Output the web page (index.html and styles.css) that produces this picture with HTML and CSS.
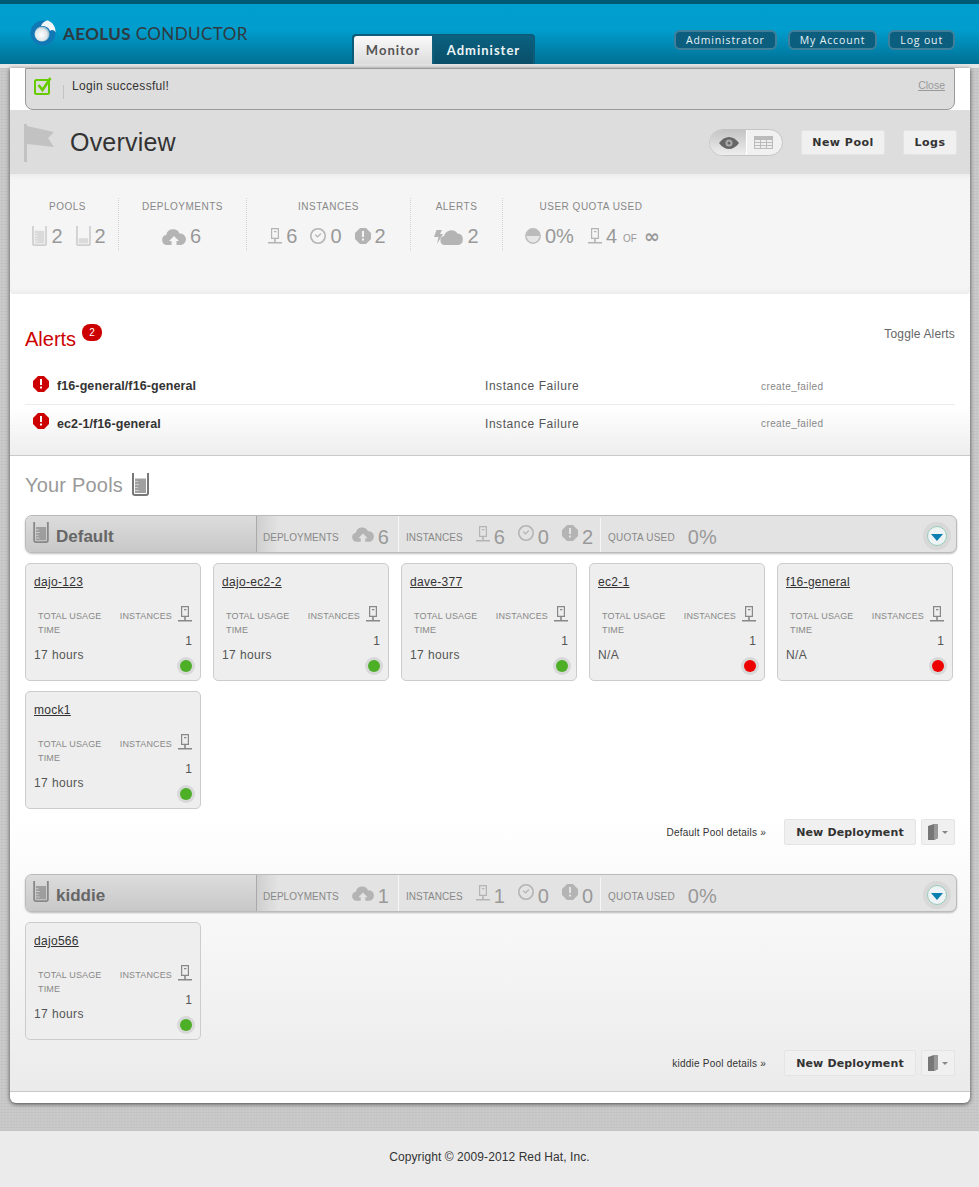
FILE: index.html
```html
<!DOCTYPE html>
<html lang="en">
<head>
<meta charset="utf-8">
<title>Aeolus Conductor</title>
<link rel="stylesheet" href="styles.css">
</head>
<body>
<svg class="defs" width="0" height="0" aria-hidden="true">
  <symbol id="i-server" viewBox="0 0 14 16"><path d="M3 0h8v11H3zM4.200 1.200v8.600h5.600V1.200z" fill-rule="evenodd"/><path d="M6 3h2.400v1.200H6zM6.200 11h1.600v3H6.200zM0 14h14v1.500H0z"/></symbol>
  <symbol id="i-clock" viewBox="0 0 16 16"><path d="M8 0a8 8 0 1 0 0 16A8 8 0 0 0 8 0zm0 1.600a6.400 6.400 0 1 1 0 12.800A6.400 6.400 0 0 1 8 1.600z" fill-rule="evenodd"/><path d="M4.800 7l.9-.8 1.800 1.900 3-3 .8.8-3.800 3.900z"/></symbol>
  <symbol id="i-alert" viewBox="0 0 16 16"><path d="M5 0h6l5 5v6l-5 5H5l-5-5V5z M7 3v6h2V3z M7 10.500v2h2v-2z" fill-rule="evenodd"/></symbol>
  <symbol id="i-cloud" viewBox="0 0 24 17"><path d="M5 17a5 5 0 0 1-.800-9.900A7 7 0 0 1 17.500 5.500 5.800 5.800 0 0 1 19 17h-4.500v-4h2.500L12 8l-5 5h2.500v4z"/></symbol>
  <symbol id="i-storm" viewBox="0 0 29 17"><path d="M11 17a4.500 4.500 0 0 1-1-8.900A7.500 7.500 0 0 1 23.500 5.500 5.800 5.800 0 0 1 24 17z"/><path d="M2.500 2H8L6 6h3l-6 10 1.500-7H0z"/></symbol>
  <symbol id="i-beaker" viewBox="0 0 17 23"><path d="M0 0h2v20a1 1 0 0 0 1 1h11a1 1 0 0 0 1-1V0h2v20a3 3 0 0 1-3 3H3a3 3 0 0 1-3-3z"/><path d="M3 5.500h11V20H3z" opacity=".7"/><path d="M3 8h3v1H3zM3 11h4v1H3zM3 14h3v1H3zM3 17h4v1H3z" fill="#fff" opacity=".45"/></symbol>
  <symbol id="i-beaker-low" viewBox="0 0 17 23"><path d="M0 0h2v20a1 1 0 0 0 1 1h11a1 1 0 0 0 1-1V0h2v20a3 3 0 0 1-3 3H3a3 3 0 0 1-3-3z"/><path d="M3 14h11v6H3z" opacity=".7"/></symbol>
</svg>

<header class="topbar">
  <div class="brand">
    <svg class="brand-mark" viewBox="0 0 26 28" width="26" height="28" aria-hidden="true">
      <defs>
        <radialGradient id="sphere" cx="45%" cy="55%" r="55%"><stop offset="0" stop-color="#fff"/><stop offset=".7" stop-color="#dfe7ea"/><stop offset="1" stop-color="#8fb6c6"/></radialGradient>
      </defs>
      <circle cx="13" cy="14" r="12.500" fill="#1177b5"/>
      <path d="M18 1.500c5 2 8 7 7.500 12-1.500-3-4-3-5.500-1.500-2-5-6-5-9-5 1-3 4-5.500 7-5.500z" fill="#f2f6f8"/>
      <circle cx="12" cy="15" r="7.500" fill="url(#sphere)"/>
    </svg>
    <div class="brand-name"><b>AEOLUS</b> CONDUCTOR</div>
  </div>
  <nav class="tabs">
    <a class="tab tab-on">Monitor</a>
    <a class="tab tab-off">Administer</a>
  </nav>
  <nav class="usernav">
    <a class="pill">Administrator</a>
    <a class="pill">My Account</a>
    <a class="pill">Log out</a>
  </nav>
</header>

<div class="sheet">
  <main class="panel">
    <div class="flash-wrap">
      <div class="flash">
        <svg class="flash-icon" viewBox="0 0 18 18" width="18" height="18" aria-hidden="true">
          <rect x="1" y="3" width="14" height="14" rx="1.500" fill="none" stroke="#6c0" stroke-width="2"/>
          <path d="M4.500 8l4 5L16.500 1" fill="none" stroke="#6c0" stroke-width="2.600"/>
        </svg>
        <span class="flash-sep"></span>
        <span class="flash-text">Login successful!</span>
        <a class="flash-close">Close</a>
      </div>
    </div>

    <section class="overview">
      <svg class="flag" viewBox="0 0 31 38" width="31" height="38" aria-hidden="true">
        <path d="M0 0h3v38H0zM3 2l27 6-6 6 6 9-27-3z" fill="#c2c2c2"/>
      </svg>
      <h1>Overview</h1>
      <div class="view-toggle">
        <span class="vt vt-on">
          <svg viewBox="0 0 20 12" width="20" height="12" aria-hidden="true"><path d="M0 6c3-4 6.500-6 10-6s7 2 10 6c-3 4-6.500 6-10 6S3 10 0 6z" fill="#666"/><circle cx="10" cy="6" r="3.500" fill="#aaa"/><circle cx="10" cy="6" r="1.500" fill="#666"/></svg>
        </span>
        <span class="vt vt-off">
          <svg viewBox="0 0 19 13" width="19" height="13" aria-hidden="true"><path d="M0 0h19v13H0z" fill="#bbb"/><path d="M1 4h5v2H1zM7 4h5v2H7zM13 4h5v2h-5zM1 7h5v2H1zM7 7h5v2H7zM13 7h5v2h-5zM1 10h5v2H1zM7 10h5v2H7zM13 10h5v2h-5z" fill="#eee"/></svg>
        </span>
      </div>
      <a class="btn btn-pool">New Pool</a>
      <a class="btn btn-logs">Logs</a>
    </section>

    <section class="stats">
      <div class="stat stat-pools">
        <div class="stat-label">POOLS</div>
        <div class="stat-row">
          <svg class="ic beaker-soft" width="15" height="20"><use href="#i-beaker"/></svg><span class="num">2</span>
          <svg class="ic beaker-soft gap-m" width="15" height="20"><use href="#i-beaker-low"/></svg><span class="num">2</span>
        </div>
      </div>
      <div class="stat stat-deploy">
        <div class="stat-label">DEPLOYMENTS</div>
        <div class="stat-row">
          <svg class="ic" width="24" height="17"><use href="#i-cloud"/></svg><span class="num">6</span>
        </div>
      </div>
      <div class="stat stat-inst">
        <div class="stat-label">INSTANCES</div>
        <div class="stat-row">
          <svg class="ic" width="14" height="16"><use href="#i-server"/></svg><span class="num">6</span>
          <svg class="ic gap-m" width="16" height="16"><use href="#i-clock"/></svg><span class="num">0</span>
          <svg class="ic gap-m" width="16" height="16"><use href="#i-alert"/></svg><span class="num">2</span>
        </div>
      </div>
      <div class="stat stat-alerts">
        <div class="stat-label">ALERTS</div>
        <div class="stat-row">
          <svg class="ic" width="29" height="17"><use href="#i-storm"/></svg><span class="num">2</span>
        </div>
      </div>
      <div class="stat stat-quota">
        <div class="stat-label">USER QUOTA USED</div>
        <div class="stat-row">
          <svg class="ic" viewBox="0 0 16 16" width="16" height="16"><circle cx="8" cy="8" r="7.200" fill="#e6e6e6" stroke="#bbb" stroke-width="1.400"/><path d="M1 8a7 7 0 0 1 14 0z" fill="#bbb"/></svg><span class="num">0%</span>
          <svg class="ic gap-l" width="14" height="16"><use href="#i-server"/></svg><span class="num">4</span>
          <span class="of">OF</span><span class="inf">∞</span>
        </div>
      </div>
    </section>

    <section class="alerts">
      <div class="alerts-head">
        <h2>Alerts</h2><span class="badge">2</span>
        <a class="toggle-alerts">Toggle Alerts</a>
      </div>
      <div class="alert-row">
        <svg class="alert-ic" width="16" height="16"><use href="#i-alert"/></svg>
        <span class="alert-name">f16-general/f16-general</span>
        <span class="alert-type">Instance Failure</span>
        <span class="alert-code">create_failed</span>
      </div>
      <div class="alert-row">
        <svg class="alert-ic" width="16" height="16"><use href="#i-alert"/></svg>
        <span class="alert-name">ec2-1/f16-general</span>
        <span class="alert-type">Instance Failure</span>
        <span class="alert-code">create_failed</span>
      </div>
    </section>

    <section class="pools">
      <div class="pools-title">
        <h2>Your Pools</h2>
        <svg class="title-beaker" width="17" height="23"><use href="#i-beaker"/></svg>
      </div>

      <article class="pool">
        <div class="pool-bar">
          <div class="pool-name">
            <svg class="pool-beaker" width="16" height="21"><use href="#i-beaker"/></svg>
            <span>Default</span>
          </div>
          <div class="pool-cell cell-dep">
            <span class="bar-label">DEPLOYMENTS</span>
            <svg class="ic bar-cloud" width="22" height="16"><use href="#i-cloud"/></svg><span class="bar-num">6</span>
          </div>
          <div class="pool-cell cell-inst">
            <span class="bar-label">INSTANCES</span>
            <svg class="ic bar-server" width="14" height="16"><use href="#i-server"/></svg><span class="bar-num">6</span>
            <svg class="ic bar-mid" width="16" height="16"><use href="#i-clock"/></svg><span class="bar-num">0</span>
            <svg class="ic bar-mid" width="16" height="16"><use href="#i-alert"/></svg><span class="bar-num">2</span>
          </div>
          <div class="pool-cell cell-quota">
            <span class="bar-label">QUOTA USED</span><span class="bar-pct">0%</span>
          </div>
          <a class="pool-toggle"><span class="pool-arrow"></span></a>
        </div>

        <div class="cards">
          <div class="card"><a class="card-name">dajo-123</a>
            <div class="card-meta"><span class="meta-time">TOTAL USAGE TIME</span><span class="meta-inst">INSTANCES</span><svg class="ic card-server" width="14" height="16"><use href="#i-server"/></svg></div>
            <div class="card-count">1</div><div class="card-usage">17 hours</div><span class="dot dot-ok"></span></div>
          <div class="card"><a class="card-name">dajo-ec2-2</a>
            <div class="card-meta"><span class="meta-time">TOTAL USAGE TIME</span><span class="meta-inst">INSTANCES</span><svg class="ic card-server" width="14" height="16"><use href="#i-server"/></svg></div>
            <div class="card-count">1</div><div class="card-usage">17 hours</div><span class="dot dot-ok"></span></div>
          <div class="card"><a class="card-name">dave-377</a>
            <div class="card-meta"><span class="meta-time">TOTAL USAGE TIME</span><span class="meta-inst">INSTANCES</span><svg class="ic card-server" width="14" height="16"><use href="#i-server"/></svg></div>
            <div class="card-count">1</div><div class="card-usage">17 hours</div><span class="dot dot-ok"></span></div>
          <div class="card"><a class="card-name">ec2-1</a>
            <div class="card-meta"><span class="meta-time">TOTAL USAGE TIME</span><span class="meta-inst">INSTANCES</span><svg class="ic card-server" width="14" height="16"><use href="#i-server"/></svg></div>
            <div class="card-count">1</div><div class="card-usage">N/A</div><span class="dot dot-bad"></span></div>
          <div class="card"><a class="card-name">f16-general</a>
            <div class="card-meta"><span class="meta-time">TOTAL USAGE TIME</span><span class="meta-inst">INSTANCES</span><svg class="ic card-server" width="14" height="16"><use href="#i-server"/></svg></div>
            <div class="card-count">1</div><div class="card-usage">N/A</div><span class="dot dot-bad"></span></div>
          <div class="card"><a class="card-name">mock1</a>
            <div class="card-meta"><span class="meta-time">TOTAL USAGE TIME</span><span class="meta-inst">INSTANCES</span><svg class="ic card-server" width="14" height="16"><use href="#i-server"/></svg></div>
            <div class="card-count">1</div><div class="card-usage">17 hours</div><span class="dot dot-ok"></span></div>
        </div>

        <div class="pool-actions">
          <a class="pool-link">Default Pool details »</a>
          <a class="btn btn-deploy">New Deployment</a>
          <a class="btn btn-menu"><svg viewBox="0 0 11 16" width="11" height="16" aria-hidden="true"><path d="M0 2l6-2h4v14l-4 2H0z" fill="#777"/><path d="M6 0h4v14l-4 2z" fill="#999"/></svg><span class="caret"></span></a>
        </div>
      </article>

      <article class="pool">
        <div class="pool-bar">
          <div class="pool-name">
            <svg class="pool-beaker" width="16" height="21"><use href="#i-beaker"/></svg>
            <span>kiddie</span>
          </div>
          <div class="pool-cell cell-dep">
            <span class="bar-label">DEPLOYMENTS</span>
            <svg class="ic bar-cloud" width="22" height="16"><use href="#i-cloud"/></svg><span class="bar-num">1</span>
          </div>
          <div class="pool-cell cell-inst">
            <span class="bar-label">INSTANCES</span>
            <svg class="ic bar-server" width="14" height="16"><use href="#i-server"/></svg><span class="bar-num">1</span>
            <svg class="ic bar-mid" width="16" height="16"><use href="#i-clock"/></svg><span class="bar-num">0</span>
            <svg class="ic bar-mid" width="16" height="16"><use href="#i-alert"/></svg><span class="bar-num">0</span>
          </div>
          <div class="pool-cell cell-quota">
            <span class="bar-label">QUOTA USED</span><span class="bar-pct">0%</span>
          </div>
          <a class="pool-toggle"><span class="pool-arrow"></span></a>
        </div>

        <div class="cards">
          <div class="card"><a class="card-name">dajo566</a>
            <div class="card-meta"><span class="meta-time">TOTAL USAGE TIME</span><span class="meta-inst">INSTANCES</span><svg class="ic card-server" width="14" height="16"><use href="#i-server"/></svg></div>
            <div class="card-count">1</div><div class="card-usage">17 hours</div><span class="dot dot-ok"></span></div>
        </div>

        <div class="pool-actions">
          <a class="pool-link">kiddie Pool details »</a>
          <a class="btn btn-deploy">New Deployment</a>
          <a class="btn btn-menu"><svg viewBox="0 0 11 16" width="11" height="16" aria-hidden="true"><path d="M0 2l6-2h4v14l-4 2H0z" fill="#777"/><path d="M6 0h4v14l-4 2z" fill="#999"/></svg><span class="caret"></span></a>
        </div>
      </article>
    </section>
  </main>
</div>

<footer class="site-foot">Copyright © 2009-2012 Red Hat, Inc.</footer>
</body>
</html>
```

FILE: styles.css
```css
* { box-sizing: border-box; }
html, body { margin: 0; padding: 0; }
body {
  font-family: "Liberation Sans", Arial, sans-serif;
  font-size: 12px;
  color: #444;
  background: #ebebeb;
}
a { color: inherit; }
h1, h2 { margin: 0; font-weight: normal; }
.defs { position: absolute; }
.ic { fill: #b4b4b4; flex: none; display: block; }

/* top bar */
.topbar {
  height: 64px;
  display: flex;
  align-items: flex-start;
  border-top: 4px solid #005a76;
  background: linear-gradient(#009fd0 0, #009dcd 26px, #006f93 60px);
}
.brand { display: flex; align-items: center; width: 352px; padding: 15px 0 0 30px; }
.brand-mark { display: block; }
.brand-name {
  margin-left: 7px;
  font-family: Lato, sans-serif;
  font-size: 17px;
  letter-spacing: .42px;
  color: #2f3a40;
  white-space: nowrap;
}
.brand-name b { font-weight: 700; }
.tabs {
  display: flex;
  margin-top: 30px;
  height: 30px;
  border: 1px solid #0c5a76;
  border-bottom: 0;
  border-radius: 4px 4px 0 0;
  background: #0f5f7c;
  width: 183px;
  padding: 1px 1px 0;
}
.tab {
  font-family: Lato, sans-serif;
  font-weight: 700;
  font-size: 13px;
  letter-spacing: 1px;
  line-height: 29px;
  text-align: center;
}
.tab-on { width: 78px; color: #555; background: linear-gradient(#fafafa, #dcdcdc); border-radius: 3px 0 0 0; margin-right: 2px; }
.tab-off { flex: 1; color: #eaf4f7; background: linear-gradient(#0a6180, #0a4e68); }
.usernav { display: flex; margin-left: auto; margin-right: 24px; margin-top: 26px; gap: 11px; }
.pill {
  height: 20px;
  padding: 0 10px;
  border: 2px solid #3f7f99;
  border-radius: 6px;
  background: #0b5e7e;
  color: #e8f3f6;
  font-family: "Open Sans", sans-serif;
  font-size: 10.500px;
  letter-spacing: .85px;
  line-height: 16px;
  white-space: nowrap;
}

/* sheet */
.sheet {
  padding: 4px 9px 28px 10px;
  background-color: #c8c8c8;
  background-image:
    repeating-linear-gradient(90deg, rgba(255,255,255,.05) 0 1px, transparent 1px 3px),
    repeating-linear-gradient(0deg, rgba(0,0,0,.03) 0 1px, transparent 1px 3px);
  box-shadow: inset 0 4px 0 #e6e6e6;
}
.panel {
  background: #fff;
  height: 1035px;
  border-radius: 0 0 6px 6px;
  box-shadow: 0 1px 4px rgba(0,0,0,.65);
}

/* flash */
.flash-wrap { padding: 0 15px; height: 42px; }
.flash {
  height: 42px;
  display: flex;
  align-items: flex-start;
  background: #ddd;
  border: 1px solid #999;
  border-radius: 0 0 8px 8px;
  padding-left: 8px;
  font-size: 12px;
  letter-spacing: .3px;
}
.flash-icon { margin-top: 8px; }
.flash-sep { width: 1px; height: 14px; margin: 16px 8px 0 11px; background: #c4c4c4; }
.flash-text { margin-top: 10px; color: #333; }
.flash-close { margin: 10px 9px 0 auto; font-size: 10.500px; letter-spacing: 0; color: #999; text-decoration: underline; }

/* overview head */
.overview {
  height: 64px;
  background: #ddd;
  display: flex;
  align-items: flex-start;
  padding: 13px 13px 0 14px;
}
.flag { flex: none; margin-top: 1px; }
.overview h1 { margin: 4px 0 0 15px; font-size: 25px; line-height: 30px; letter-spacing: .2px; color: #333; }
.view-toggle {
  display: flex;
  margin: 6px 0 0 auto;
  width: 74px;
  height: 27px;
  border: 1px solid #c4c4c4;
  border-radius: 14px;
  background: #f1f1f1;
  overflow: hidden;
}
.vt { flex: 1; display: flex; align-items: center; justify-content: center; }
.vt-on { flex: none; width: 37px; padding-left: 2px; background: linear-gradient(#c4c4c4, #eee); border-right: 1px solid #fff; }
.vt-off { padding-right: 3px; }
.btn {
  display: block;
  background: #f0f0f0;
  border: 1px solid #e4e4e4;
  border-radius: 2px;
  font-family: "DejaVu Sans", sans-serif;
  font-weight: 700;
  font-size: 11px;
  letter-spacing: .5px;
  color: #333;
  text-align: center;
  white-space: nowrap;
}
.btn-pool { width: 84px; height: 25px; line-height: 23px; margin: 7px 0 0 18px; }
.btn-logs { width: 54px; height: 25px; line-height: 23px; margin: 7px 0 0 18px; }

/* stats */
.stats {
  height: 120px;
  display: flex;
  align-items: flex-start;
  padding-top: 24px;
  background: #f5f5f5;
  box-shadow: inset 0 6px 6px -5px rgba(0,0,0,.06), inset 0 -6px 6px -5px rgba(0,0,0,.06);
  border-radius: 0 0 4px 4px;
}
.stat { height: 53px; border-right: 1px dotted #d4d4d4; text-align: center; flex: none; }
.stat-pools { width: 109px; padding-left: 7px; }
.stat-deploy { width: 128px; }
.stat-inst { width: 164px; }
.stat-alerts { width: 92px; }
.stat-quota { width: 176px; border-right: 0; }
.stat-label { padding-top: 1px; font-size: 10px; line-height: 16px; letter-spacing: .5px; color: #888; }
.stat-row { display: flex; align-items: center; justify-content: center; height: 24px; margin-top: 9px; }
.stat-pools .stat-row { padding-left: 3px; }
.stat-deploy .stat-row { padding-right: 2px; }
.stat-inst .stat-row { padding-right: 3px; }
.num { margin-left: 4px; font-size: 20px; line-height: 24px; color: #999; }
.beaker-soft { fill: #cfcfcf; }
.gap-m { margin-left: 13px; }
.gap-l { margin-left: 14px; }
.of { margin-left: 6px; font-size: 10px; color: #999; padding-top: 5px; }
.inf { margin-left: 7px; font-family: "DejaVu Sans", sans-serif; font-weight: 700; font-size: 19px; line-height: 22px; color: #999; }
.stat-quota .stat-row { justify-content: flex-start; padding-left: 22px; }

/* alerts */
.alerts {
  height: 162px;
  padding: 30px 15px 0;
  background: linear-gradient(#fff 0, #fff 112px, #eee 161px);
  border-bottom: 1px solid #c9c9c9;
}
.alerts-head { display: flex; align-items: flex-start; height: 44px; }
.alerts-head h2 { font-size: 20px; line-height: 30px; color: #c00; }
.badge {
  width: 20px; height: 17px; margin: 0 0 0 6px;
  background: #c00; color: #fff; border-radius: 8px;
  font-size: 10px; line-height: 17px; text-align: center;
}
.toggle-alerts { margin: 3px 0 0 auto; font-size: 12px; line-height: 14px; letter-spacing: .15px; color: #666; }
.alert-row {
  display: flex;
  align-items: center;
  height: 37px;
  padding-left: 8px;
  border-bottom: 1px solid #ececec;
}
.alert-row:last-child { border-bottom: 0; }
.alert-ic { fill: #c00; flex: none; margin-top: -5px; }
.alert-name { margin-left: 8px; width: 428px; font-weight: 700; font-size: 12.500px; letter-spacing: .1px; color: #333; }
.alert-type { width: 276px; font-size: 12px; letter-spacing: .55px; color: #555; }
.alert-code { font-size: 10px; letter-spacing: .4px; color: #888; }

/* pools */
.pools {
  height: 636px;
  padding: 0 13px 0 15px;
  background: linear-gradient(#fff 0, #fff 360px, #ebebeb 635px);
  border-bottom: 1px solid #c9c9c9;
}
.pools-title { display: flex; align-items: flex-start; height: 59px; padding-top: 17px; }
.pools-title h2 { font-size: 20px; line-height: 24px; letter-spacing: .2px; color: #999; }
.title-beaker { fill: #777; margin-left: 9px; }
.pool + .pool { margin-top: 29px; }
.pool-bar {
  display: flex;
  align-items: stretch;
  height: 38px;
  background: #e3e3e3;
  border: 1px solid #bbb;
  border-radius: 7px;
  box-shadow: 0 1px 2px rgba(0,0,0,.25);
  position: relative;
}
.pool-name {
  width: 231px;
  flex: none;
  display: flex;
  align-items: center;
  padding: 5px 0 0 7px;
  background: linear-gradient(#dcdcdc, #c8c8c8);
  border-right: 1px solid #aaa;
  border-radius: 6px 0 0 6px;
  font-weight: 700;
  font-size: 17px;
  color: #666;
}
.pool-beaker { fill: #888; margin: -9px 7px 0 0; }
.pool-cell {
  display: flex;
  align-items: center;
  padding: 4px 0 0 7px;
  border-right: 1px solid #f6f6f6;
  flex: none;
  margin-top: 2px;
  color: #999;
}
.cell-dep { width: 142px; padding-left: 6px; padding-top: 6px; background: linear-gradient(90deg, #cfcfcf, #e3e3e3 22px); margin-top: 0; }
.cell-inst { width: 202px; }
.cell-quota { border-right: 0; }
.bar-label { font-size: 10px; letter-spacing: .02px; color: #888; }
.cell-quota .bar-label { letter-spacing: .2px; }
.bar-cloud { margin-left: 13px; margin-top: -6px; }
.bar-server { margin-left: 13px; margin-top: -6px; }
.bar-mid { margin-left: 13px; margin-top: -8px; }
.bar-num { margin-left: 4px; font-size: 20px; color: #999; line-height: 24px; }
.bar-pct { margin-left: 13px; font-size: 20px; color: #999; line-height: 24px; }
.pool-toggle {
  position: absolute;
  right: 9px; top: 10px;
  width: 20px; height: 20px;
  border-radius: 50%;
  background: #eef3f5;
  border: 1px solid #9cb;
  box-shadow: 0 0 0 4px #d8d8d8;
  display: flex;
  align-items: center;
  justify-content: center;
}
.pool-arrow { width: 0; height: 0; border: 6px solid transparent; border-top: 7px solid #0a7fb0; border-bottom: 0; margin-top: 2px; }

.cards { display: flex; flex-wrap: wrap; gap: 10px 12px; margin-top: 10px; }
.card {
  position: relative;
  width: 176px;
  height: 118px;
  background: #eee;
  border: 1px solid #ccc;
  border-radius: 5px;
  padding: 10px 8px 0;
}
.card-name { display: block; font-size: 12px; line-height: 16px; letter-spacing: .3px; color: #333; text-decoration: underline; }
.card-meta { display: flex; align-items: flex-start; margin-top: 19px; padding-left: 4px; height: 26px; }
.meta-time { width: 83px; padding-right: 14px; font-size: 9px; line-height: 14px; letter-spacing: .15px; color: #888; }
.meta-inst { font-size: 9px; line-height: 14px; letter-spacing: .15px; color: #888; }
.card-server { fill: #888; margin: -3px 0 0 6px; }
.card-count { margin-top: -1px; height: 14px; line-height: 14px; text-align: right; color: #555; font-size: 12px; }
.card-usage { font-size: 12px; line-height: 14px; letter-spacing: .4px; color: #555; }
.dot {
  position: absolute;
  right: 8px; bottom: 8px;
  width: 12px; height: 12px;
  border-radius: 50%;
  box-shadow: 0 0 0 3px #d8d8d8;
}
.dot-ok { background: #4caf26; }
.dot-bad { background: #e00; }

.pool-actions { display: flex; align-items: center; justify-content: flex-end; margin-top: 10px; padding-right: 2px; height: 26px; }
.pool-link { margin-right: 18px; font-size: 10px; letter-spacing: .23px; color: #333; }
.btn-deploy { width: 132px; height: 26px; line-height: 25px; letter-spacing: .15px; }
.btn-menu { width: 34px; height: 26px; margin-left: 5px; display: flex; align-items: center; justify-content: center; gap: 3px; }
.caret { width: 0; height: 0; border: 3px solid transparent; border-top: 3px solid #888; border-bottom: 0; }

/* footer */
.site-foot { height: 56px; padding-top: 19px; background: #ebebeb; text-align: center; font-size: 12px; line-height: 14px; letter-spacing: .08px; color: #333; }
```
